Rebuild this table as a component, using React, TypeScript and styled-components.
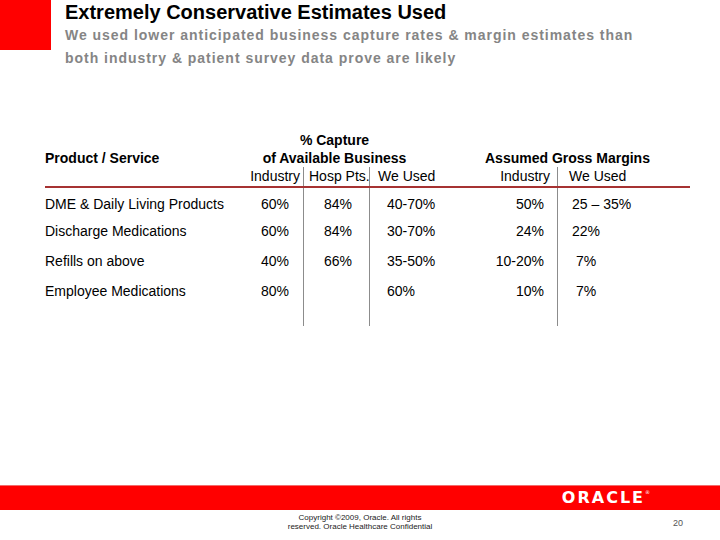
import React from "react";
import styled, { createGlobalStyle } from "styled-components";

const GlobalStyle = createGlobalStyle`
    html, body {
        margin: 0;
        padding: 0;
        background: #ffffff;
    }
    body {
        font-family: "Liberation Sans", Arial, sans-serif;
        color: #000000;
    }
`;

const Slide = styled.div`
    width: 720px;
    height: 540px;
    display: flex;
    flex-direction: column;
    overflow: hidden;
`;

const Header = styled.div`
    display: flex;
    align-items: flex-start;
`;

const RedBlock = styled.div`
    width: 51px;
    height: 50px;
    background: #ff0000;
    flex-shrink: 0;
`;

const TitleBlock = styled.div`
    margin-left: 14px;
    display: flex;
    flex-direction: column;
`;

const Title = styled.h1`
    margin: 0;
    font-size: 20px;
    line-height: 24px;
    font-weight: 700;
    color: #000000;
`;

const Subtitle = styled.p`
    margin: 0;
    font-size: 14px;
    line-height: 23px;
    font-weight: 700;
    letter-spacing: 0.97px;
    color: #858585;
`;

const Table = styled.div`
    margin: 61px 0 0 45px;
    width: 645px;
    display: flex;
    flex-direction: column;
`;

const COLUMNS = "205px 53px 66px 116px 72px 133px";

const HeadGrid = styled.div`
    display: grid;
    grid-template-columns: ${COLUMNS};
    grid-template-rows: 18px 18px;
    font-size: 14px;
    line-height: 18px;
    font-weight: 700;
`;

const HeadCell = styled.div<{ $col: string; $row: string; $align?: string; $pr?: number }>`
    grid-column: ${(p) => p.$col};
    grid-row: ${(p) => p.$row};
    text-align: ${(p) => p.$align || "left"};
    padding-right: ${(p) => p.$pr || 0}px;
    white-space: nowrap;
`;

const Row = styled.div<{ $line?: boolean; $h: number }>`
    display: grid;
    grid-template-columns: ${COLUMNS};
    height: ${(p) => p.$h}px;
    font-size: 14px;
    line-height: 16px;
    border-bottom: ${(p) => (p.$line ? "2px solid #a63232" : "none")};
    box-sizing: border-box;
`;

const Cell = styled.div<{ $divider?: boolean; $align?: string; $pl?: number; $pr?: number }>`
    border-left: ${(p) => (p.$divider ? "1px solid #8c8c8c" : "none")};
    text-align: ${(p) => p.$align || "left"};
    padding-left: ${(p) => p.$pl || 0}px;
    padding-right: ${(p) => p.$pr || 0}px;
    padding-top: 8px;
    white-space: pre;
    line-height: 16px;
`;

const SubHead = styled(Cell)`
    padding-top: 1px;
`;

const Footer = styled.div`
    margin-top: auto;
    display: flex;
    flex-direction: column;
`;

const RedBar = styled.div`
    height: 24px;
    background: #ff0000;
    border-top: 1px solid #f26b6b;
    display: flex;
    align-items: center;
    justify-content: flex-end;
    padding-right: 70px;
`;

const OracleLogo = styled.span`
    color: #ffffff;
    font-family: "DejaVu Sans", "Liberation Sans", sans-serif;
    font-size: 16px;
    font-weight: 700;
    letter-spacing: 2px;
    line-height: 16px;
    display: inline-flex;
    align-items: flex-start;

    & > sup {
        font-size: 5px;
        line-height: 5px;
        font-weight: 400;
        letter-spacing: 0;
    }
`;

const BottomRow = styled.div`
    height: 30px;
    display: grid;
    grid-template-columns: 1fr auto 1fr;
    align-items: start;
`;

const Copyright = styled.div`
    grid-column: 2;
    padding-top: 3px;
    font-size: 8px;
    line-height: 9px;
    text-align: center;
    color: #222222;
`;

const PageNumber = styled.div`
    grid-column: 3;
    justify-self: end;
    padding: 8px 37px 0 0;
    font-size: 9px;
    color: #555555;
`;

type DataRow = {
    name: string;
    industry: string;
    hosp: string;
    used: string;
    marginIndustry: string;
    marginUsed: string;
    height: number;
};

const rows: DataRow[] = [
    { name: "DME & Daily Living Products", industry: "60%", hosp: "84%", used: "40-70%", marginIndustry: "50%", marginUsed: "25 – 35%", height: 27 },
    { name: "Discharge Medications", industry: "60%", hosp: "84%", used: "30-70%", marginIndustry: "24%", marginUsed: "22%", height: 30 },
    { name: "Refills on above", industry: "40%", hosp: "66%", used: "35-50%", marginIndustry: "10-20%", marginUsed: " 7%", height: 30 },
    { name: "Employee Medications", industry: "80%", hosp: "", used: "60%", marginIndustry: "10%", marginUsed: " 7%", height: 51 },
];

export default function App() {
    return (
        <Slide>
            <GlobalStyle />
            <Header>
                <RedBlock />
                <TitleBlock>
                    <Title>Extremely Conservative Estimates Used</Title>
                    <Subtitle>
                        We used lower anticipated business capture rates &amp; margin estimates than
                        <br />
                        both industry &amp; patient survey data prove are likely
                    </Subtitle>
                </TitleBlock>
            </Header>

            <Table>
                <HeadGrid>
                    <HeadCell $col="2 / 5" $row="1" $align="center" $pr={66}>% Capture</HeadCell>
                    <HeadCell $col="1" $row="2">Product / Service</HeadCell>
                    <HeadCell $col="2 / 5" $row="2" $align="center" $pr={66}>of Available Business</HeadCell>
                    <HeadCell $col="5 / 7" $row="2">Assumed Gross Margins</HeadCell>
                </HeadGrid>
                <Row $line $h={21}>
                    <SubHead />
                    <SubHead $align="right" $pr={3}>Industry</SubHead>
                    <SubHead $divider $pl={5}>Hosp Pts.</SubHead>
                    <SubHead $divider $pl={8}>We Used</SubHead>
                    <SubHead $align="right" $pr={7}>Industry</SubHead>
                    <SubHead $divider $pl={11}>We Used</SubHead>
                </Row>
                {rows.map((r) => (
                    <Row key={r.name} $h={r.height}>
                        <Cell>{r.name}</Cell>
                        <Cell $pl={11}>{r.industry}</Cell>
                        <Cell $divider $pl={20}>{r.hosp}</Cell>
                        <Cell $divider $pl={17}>{r.used}</Cell>
                        <Cell $align="right" $pr={13}>{r.marginIndustry}</Cell>
                        <Cell $divider $pl={14}>{r.marginUsed}</Cell>
                    </Row>
                ))}
            </Table>

            <Footer>
                <RedBar>
                    <OracleLogo>
                        ORACLE<sup>®</sup>
                    </OracleLogo>
                </RedBar>
                <BottomRow>
                    <Copyright>
                        Copyright ©2009, Oracle. All rights
                        <br />
                        reserved. Oracle Healthcare Confidential
                    </Copyright>
                    <PageNumber>20</PageNumber>
                </BottomRow>
            </Footer>
        </Slide>
    );
}
